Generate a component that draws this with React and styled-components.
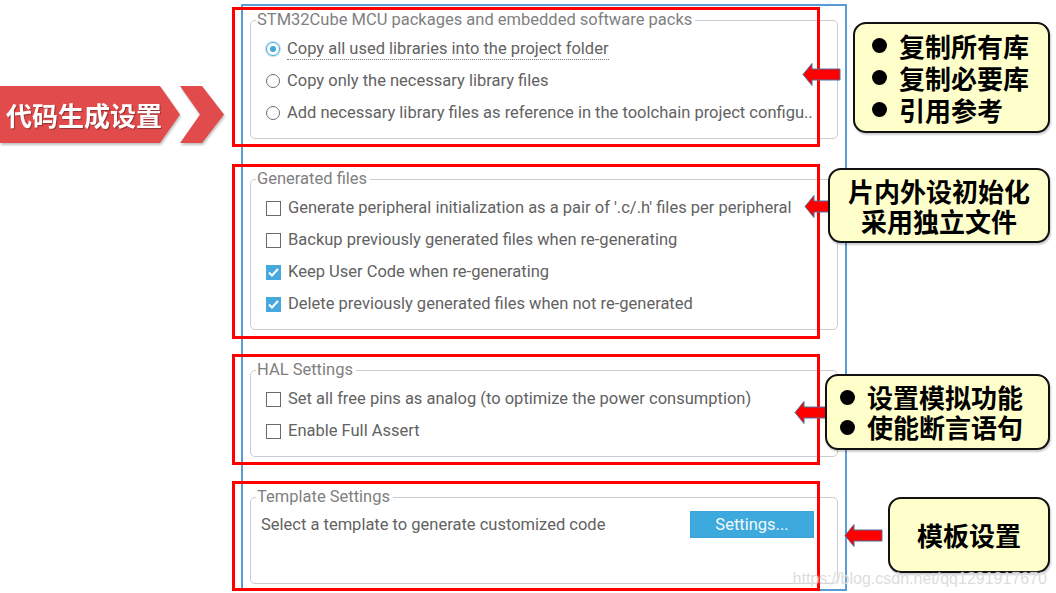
import React from 'react';
import styled, { createGlobalStyle } from 'styled-components';

const GlobalStyle = createGlobalStyle`
	html, body {
		margin: 0;
		padding: 0;
		background: #ffffff;
	}
	body {
		font-family: Roboto, 'Liberation Sans', sans-serif;
	}
`;

const Page = styled.div`
	position: relative;
	display: flex;
	width: 1056px;
	height: 593px;
	overflow: hidden;
`;

const LeftCol = styled.div`
	width: 241px;
	flex: none;
	padding-top: 86px;
	box-sizing: border-box;
`;

const Banner = styled.div`
	display: flex;
	height: 57px;
	filter: drop-shadow(1px 2px 1px rgba(0, 0, 0, 0.25));
`;

const BannerBody = styled.div`
	width: 180px;
	height: 100%;
	background: #e14b4b;
	clip-path: polygon(0 0, 160px 0, 180px 50%, 160px 100%, 0 100%);
	display: flex;
	align-items: center;
	padding-left: 6px;
	box-sizing: border-box;
	color: #ffffff;
	font-family: 'Noto Sans CJK SC', sans-serif;
	font-weight: 700;
	font-size: 26px;
	line-height: 30px;
	white-space: nowrap;
	text-shadow: 1px 1px 1px rgba(0, 0, 0, 0.35);
`;

const BannerTip = styled.div`
	width: 44px;
	height: 100%;
	background: #e14b4b;
	clip-path: polygon(0 0, 22px 0, 44px 50%, 22px 100%, 0 100%, 20px 50%);
`;

const Panel = styled.div`
	width: 606px;
	height: 587px;
	margin-top: 4px;
	flex: none;
	box-sizing: border-box;
	border: 2px solid #5b9bd5;
	padding: 5px 7px 0 7px;
	display: flex;
	flex-direction: column;
	gap: 31px;
`;

const Section = styled.div`
	position: relative;
`;

const Group = styled.fieldset`
	margin: 0;
	padding: 0;
	min-width: 0;
	border: 1px solid #c9cdd2;
	border-radius: 5px;
`;

const Legend = styled.legend`
	margin-left: 5px;
	padding: 0 3px 0 1px;
	font-size: 16.5px;
	line-height: 18px;
	color: #808080;
`;

const Body = styled.div`
	padding: ${p => p.pad || '4px 0 9px 15px'};
	min-height: ${p => p.minH || 0}px;
	box-sizing: border-box;
`;

const Item = styled.div`
	display: flex;
	align-items: center;
	height: 32px;
	gap: 7px;
	font-size: 16.5px;
	color: #626262;
	white-space: nowrap;
`;

const Label = styled.span`
	border-bottom: 1px dotted ${p => (p.focus ? '#777' : 'transparent')};
	line-height: 20px;
`;

const Radio = styled.span`
	width: 14px;
	height: 14px;
	border-radius: 50%;
	box-sizing: border-box;
	border: 1.5px solid ${p => (p.on ? '#3ea8dc' : '#707070')};
	box-shadow: ${p => (p.on ? '0 0 0 1px #bfe2f4' : 'none')};
	display: grid;
	place-items: center;
	flex: none;
	&::after {
		content: '';
		width: 6px;
		height: 6px;
		border-radius: 50%;
		background: ${p => (p.on ? '#3ea8dc' : 'transparent')};
	}
`;

const Box = styled.span`
	width: 15px;
	height: 15px;
	box-sizing: border-box;
	border: 1px solid ${p => (p.on ? '#45a9dd' : '#6a6a6a')};
	background: ${p => (p.on ? '#45a9dd' : '#ffffff')};
	display: grid;
	place-items: center;
	flex: none;
`;

const TemplateRow = styled.div`
	display: flex;
	align-items: center;
	justify-content: space-between;
	height: 32px;
	padding: 0 23px 0 10px;
	font-size: 16.5px;
	color: #626262;
`;

const Button = styled.button`
	width: 124px;
	height: 27px;
	border: 1px solid #3aa4da;
	background: #3ea9dc;
	color: #f2f9fd;
	font-family: Roboto, 'Liberation Sans', sans-serif;
	font-size: 16.5px;
	padding: 0;
`;

const Highlight = styled.div`
	position: absolute;
	left: -18px;
	right: 18px;
	top: ${p => p.top}px;
	bottom: ${p => p.bottom}px;
	border: 3px solid #ff0000;
	pointer-events: none;
`;

const Note = styled.div`
	position: absolute;
	left: ${p => p.left}px;
	top: ${p => p.top}px;
	width: ${p => p.w}px;
	height: ${p => p.h}px;
	box-sizing: border-box;
	background: #ffffcc;
	border: 2px solid #111111;
	border-radius: 13px;
	display: flex;
	flex-direction: column;
	justify-content: center;
	align-items: ${p => (p.center ? 'center' : 'flex-start')};
	padding-left: ${p => p.padL || 0}px;
	font-family: 'Noto Sans CJK SC', sans-serif;
	font-weight: 700;
	font-size: 26px;
	color: #000000;
	box-shadow: 1px 2px 2px rgba(0, 0, 0, 0.2);
`;

const NoteLine = styled.div`
	display: flex;
	align-items: center;
	height: ${p => p.lh || 30}px;
	line-height: ${p => p.lh || 30}px;
	gap: 12px;
	white-space: nowrap;
	&::before {
		content: '';
		display: ${p => (p.bullet ? 'block' : 'none')};
		width: 15px;
		height: 15px;
		border-radius: 50%;
		background: #000000;
	}
`;

const ArrowWrap = styled.svg`
	position: absolute;
	left: ${p => p.left}px;
	top: ${p => p.top}px;
`;

const Watermark = styled.div`
	position: absolute;
	right: 9px;
	bottom: 5px;
	font-family: 'Liberation Sans', Arial, sans-serif;
	font-size: 16px;
	color: rgba(190, 190, 190, 0.55);
	text-shadow: 0 0 1px #ffffff;
	pointer-events: none;
`;

const Check = () => (
	<svg width="11" height="9" viewBox="0 0 11 9">
		<path d="M1 4.5 L4 7.5 L10 1" fill="none" stroke="#ffffff" strokeWidth="2" />
	</svg>
);

const Arrow = ({ left, top }) => (
	<ArrowWrap left={left} top={top} width="39" height="25" viewBox="0 0 39 25">
		<path
			d="M1 12.5 L10 1.5 L10 7 L38 7 L38 18 L10 18 L10 23.5 Z"
			fill="#ff0000"
			stroke="#4f6fa0"
			strokeWidth="1"
		/>
	</ArrowWrap>
);

const CheckItem = ({ on, children }) => (
	<Item>
		<Box on={on}>{on ? <Check /> : null}</Box>
		<Label>{children}</Label>
	</Item>
);

const RadioItem = ({ on, children }) => (
	<Item>
		<Radio on={on} />
		<Label focus={on}>{children}</Label>
	</Item>
);

const App = () => {
	return (
		<Page>
			<GlobalStyle />
			<LeftCol>
				<Banner>
					<BannerBody>代码生成设置</BannerBody>
					<BannerTip />
				</Banner>
			</LeftCol>
			<Panel>
				<Section>
					<Group>
						<Legend>STM32Cube MCU packages and embedded software packs</Legend>
						<Body>
							<RadioItem on>Copy all used libraries into the project folder</RadioItem>
							<RadioItem>Copy only the necessary library files</RadioItem>
							<RadioItem>Add necessary library files as reference in the toolchain project configu..</RadioItem>
						</Body>
					</Group>
					<Highlight top={-4} bottom={-8} />
					<Arrow left={552} top={51} />
					<Note left={603} top={11} w={197} h={111} padL={17}>
						<NoteLine bullet lh={32}>复制所有库</NoteLine>
						<NoteLine bullet lh={32}>复制必要库</NoteLine>
						<NoteLine bullet lh={32}>引用参考</NoteLine>
					</Note>
				</Section>
				<Section>
					<Group>
						<Legend>Generated files</Legend>
						<Body>
							<CheckItem>Generate peripheral initialization as a pair of '.c/.h' files per peripheral</CheckItem>
							<CheckItem>Backup previously generated files when re-generating</CheckItem>
							<CheckItem on>Keep User Code when re-generating</CheckItem>
							<CheckItem on>Delete previously generated files when not re-generated</CheckItem>
						</Body>
					</Group>
					<Highlight top={-6} bottom={-9} />
					<Arrow left={554} top={24} />
					<Note left={578} top={-2} w={222} h={75} center>
						<NoteLine>片内外设初始化</NoteLine>
						<NoteLine>采用独立文件</NoteLine>
					</Note>
				</Section>
				<Section>
					<Group>
						<Legend>HAL Settings</Legend>
						<Body>
							<CheckItem>Set all free pins as analog (to optimize the power consumption)</CheckItem>
							<CheckItem>Enable Full Assert</CheckItem>
						</Body>
					</Group>
					<Highlight top={-7} bottom={-8} />
					<Arrow left={544} top={39} />
					<Note left={575} top={13} w={225} h={76} padL={13}>
						<NoteLine bullet>设置模拟功能</NoteLine>
						<NoteLine bullet>使能断言语句</NoteLine>
					</Note>
				</Section>
				<Section>
					<Group>
						<Legend>Template Settings</Legend>
						<Body pad="2px 0 0 0" minH={77}>
							<TemplateRow>
								<span>Select a template to generate customized code</span>
								<Button>Settings...</Button>
							</TemplateRow>
						</Body>
					</Group>
					<Highlight top={-7} bottom={-7} />
					<Arrow left={594} top={35} />
					<Note left={638} top={9} w={162} h={76} center>
						<NoteLine>模板设置</NoteLine>
					</Note>
				</Section>
			</Panel>
			<Watermark>https://blog.csdn.net/qq1291917670</Watermark>
		</Page>
	);
};

export default App;
